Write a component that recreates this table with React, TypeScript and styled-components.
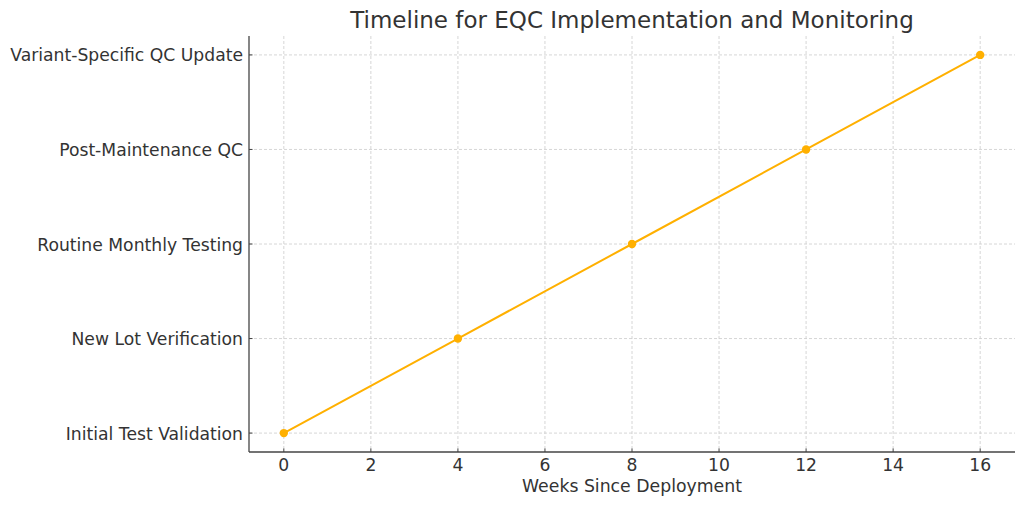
import { FC } from 'react';
import styled, { createGlobalStyle } from 'styled-components';

const GlobalStyle = createGlobalStyle`
  html, body {
    margin: 0;
    padding: 0;
    background: #ffffff;
  }
  body {
    font-family: 'DejaVu Sans', 'Liberation Sans', sans-serif;
    color: #333333;
  }
`;

// axes geometry (pixels)
const AX_LEFT = 249;
const AX_RIGHT = 1015;
const AX_TOP = 36;
const AX_BOTTOM = 452;

const X_MIN = -0.8;
const X_MAX = 16.8;
const Y_MIN = -0.2;
const Y_MAX = 4.2;

const sx = (v: number): number => AX_LEFT + ((v - X_MIN) / (X_MAX - X_MIN)) * (AX_RIGHT - AX_LEFT);
const sy = (v: number): number => AX_BOTTOM - ((v - Y_MIN) / (Y_MAX - Y_MIN)) * (AX_BOTTOM - AX_TOP);

const stages = [
  'Initial Test Validation',
  'New Lot Verification',
  'Routine Monthly Testing',
  'Post-Maintenance QC',
  'Variant-Specific QC Update',
];

const points = [0, 4, 8, 12, 16];
const xTicks = [0, 2, 4, 6, 8, 10, 12, 14, 16];

const SVG_HEIGHT = 476;

const App: FC = () => {
  const path = points.map((w, i) => `${i === 0 ? 'M' : 'L'}${sx(w)},${sy(i)}`).join(' ');

  return (
    <>
      <GlobalStyle />
      <Figure>
        <Title>Timeline for EQC Implementation and Monitoring</Title>
        <Plot width={1024} height={SVG_HEIGHT} viewBox={`0 0 1024 ${SVG_HEIGHT}`}>
          {xTicks.map((t) => (
            <GridLine key={`gx${t}`} x1={sx(t)} x2={sx(t)} y1={AX_TOP} y2={AX_BOTTOM} />
          ))}
          {stages.map((_, i) => (
            <GridLine key={`gy${i}`} x1={AX_LEFT} x2={AX_RIGHT} y1={sy(i)} y2={sy(i)} />
          ))}

          <path d={path} fill="none" stroke="#FFB000" strokeWidth={2} strokeLinejoin="round" />
          {points.map((w, i) => (
            <circle key={`p${w}`} cx={sx(w)} cy={sy(i)} r={4.2} fill="#FFB000" />
          ))}

          <Spine x1={AX_LEFT} x2={AX_LEFT} y1={AX_TOP} y2={AX_BOTTOM} />
          <Spine x1={AX_LEFT} x2={AX_RIGHT} y1={AX_BOTTOM} y2={AX_BOTTOM} />

          {xTicks.map((t) => (
            <g key={`tx${t}`}>
              <Tick x1={sx(t)} x2={sx(t)} y1={AX_BOTTOM} y2={AX_BOTTOM - 3.5} />
              <TickLabel x={sx(t)} y={AX_BOTTOM + 19} textAnchor="middle">
                {t}
              </TickLabel>
            </g>
          ))}
          {stages.map((s, i) => (
            <g key={`ty${i}`}>
              <Tick x1={AX_LEFT} x2={AX_LEFT + 3.5} y1={sy(i)} y2={sy(i)} />
              <TickLabel x={AX_LEFT - 6} y={sy(i) + 6.5} textAnchor="end">
                {s}
              </TickLabel>
            </g>
          ))}
        </Plot>
        <XLabel>Weeks Since Deployment</XLabel>
      </Figure>
    </>
  );
};

export default App;

const Figure = styled.div`
  position: relative;
  width: 1024px;
  height: 507px;
  overflow: hidden;
`;

const Title = styled.h1`
  position: absolute;
  top: 7px;
  left: ${AX_LEFT}px;
  width: ${AX_RIGHT - AX_LEFT}px;
  margin: 0;
  text-align: center;
  font-size: 23px;
  font-weight: normal;
  line-height: 26px;
  color: #333333;
`;

const Plot = styled.svg`
  display: block;
`;

const XLabel = styled.div`
  margin-left: ${AX_LEFT}px;
  width: ${AX_RIGHT - AX_LEFT}px;
  text-align: center;
  font-size: 17.3px;
  line-height: 20px;
  color: #333333;
`;

const GridLine = styled.line`
  stroke: #cccccc;
  stroke-width: 0.8;
  stroke-dasharray: 3 2;
`;

const Spine = styled.line`
  stroke: #444444;
  stroke-width: 1.3;
`;

const Tick = styled.line`
  stroke: #444444;
  stroke-width: 1;
`;

const TickLabel = styled.text`
  font-family: 'DejaVu Sans', sans-serif;
  font-size: 17.2px;
  fill: #333333;
`;
